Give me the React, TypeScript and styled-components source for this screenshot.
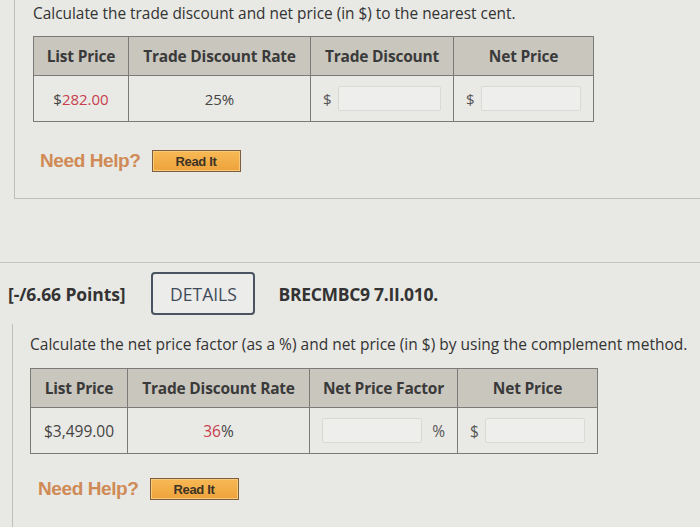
import styled, { createGlobalStyle } from "styled-components";

const GlobalStyle = createGlobalStyle`
  body {
    margin: 0;
    background: #e8e8e4;
    font-family: "Open Sans", "DejaVu Sans", sans-serif;
    color: #333;
  }
`

const Page = styled.div`
  width: 700px;
  height: 527px;
  overflow: hidden;
`

const Panel = styled.div<{ $left: number; $pad: number }>`
  margin-left: ${(p) => p.$left}px;
  padding-left: ${(p) => p.$pad}px;
  border-left: 1px solid #bdbdb9;
`

const TopPanel = styled(Panel)`
  height: 199px;
  border-bottom: 1px solid #bdbdb9;
  padding-top: 3px;
  box-sizing: border-box;
`

const Prompt = styled.p<{ $size: number }>`
  margin: 0;
  font-size: ${(p) => p.$size}px;
  color: #333;
  white-space: nowrap;
`

const Table = styled.table<{ $width: number; $top: number }>`
  width: ${(p) => p.$width}px;
  margin-top: ${(p) => p.$top}px;
  border-collapse: collapse;
  table-layout: fixed;
  border: 1.5px solid #7a7a78;
`

const Th = styled.th<{ $w: number; $size: number }>`
  width: ${(p) => p.$w}px;
  height: 38px;
  padding: 0;
  background: #c9c6be;
  border: 1.5px solid #7a7a78;
  font-size: ${(p) => p.$size}px;
  font-weight: 700;
  color: #3a3a3a;
  text-align: center;
  white-space: nowrap;
  letter-spacing: -0.2px;
`

const Td = styled.td<{ $size: number; $h: number }>`
  height: ${(p) => p.$h}px;
  padding: 0 12px;
  background: #e9e9e5;
  border: 1.5px solid #7a7a78;
  font-size: ${(p) => p.$size}px;
  color: #444;
  text-align: center;
`

const Red = styled.span`
  color: #c7404d;
`

const Field = styled.div`
  display: flex;
  align-items: center;
  gap: 6px;
  color: #555;
`

const Input = styled.div`
  flex: 1;
  height: 23px;
  background: #eeeeec;
  border: 1px solid #d9d9d5;
  border-radius: 2px;
`

const HelpRow = styled.div<{ $top: number; $left: number }>`
  display: flex;
  align-items: center;
  gap: 11px;
  margin-top: ${(p) => p.$top}px;
  margin-left: ${(p) => p.$left}px;
`

const NeedHelp = styled.span`
  font-family: "Liberation Sans", Arial, sans-serif;
  font-size: 19px;
  font-weight: 700;
  color: #cf8a55;
  letter-spacing: -0.4px;
`

const ReadIt = styled.button`
  width: 89px;
  height: 22px;
  padding: 0;
  background: linear-gradient(#f7b955, #eea23b);
  border: 1px solid #7d5f3e;
  box-shadow: inset 0 0 0 1px #f9c97a;
  font-family: "Liberation Sans", Arial, sans-serif;
  font-size: 13px;
  font-weight: 700;
  color: #3b3326;
  letter-spacing: -0.3px;
`

const QuestionHeader = styled.div`
  margin-top: 63px;
  border-top: 1px solid #c4c4c0;
  height: 62px;
  display: flex;
  align-items: center;
  padding-left: 8px;
  box-sizing: border-box;
`

const Points = styled.span`
  font-size: 17.5px;
  font-weight: 700;
  color: #333;
  letter-spacing: -0.1px;
`

const DetailsButton = styled.button`
  margin-left: 26px;
  width: 104px;
  height: 43px;
  background: #ececea;
  border: 2px solid #4a5360;
  border-radius: 4px;
  font-family: "Open Sans", sans-serif;
  font-size: 17.5px;
  color: #3f4a5a;
`

const QuestionId = styled.span`
  margin-left: 23px;
  font-size: 17.5px;
  font-weight: 700;
  color: #333;
  letter-spacing: -0.3px;
`

const BottomPanel = styled(Panel)`
  padding-top: 9px;
  height: 220px;
`

const App = () => {
  return (
    <>
      <GlobalStyle />
      <Page>
        <TopPanel $left={14} $pad={18}>
          <Prompt $size={15.4}>Calculate the trade discount and net price (in $) to the nearest cent.</Prompt>
          <Table $width={556} $top={12}>
            <thead>
              <tr>
                <Th $w={94} $size={15.5}>List Price</Th>
                <Th $w={181} $size={15.5}>Trade Discount Rate</Th>
                <Th $w={142} $size={15.5}>Trade Discount</Th>
                <Th $w={139} $size={15.5}>Net Price</Th>
              </tr>
            </thead>
            <tbody>
              <tr>
                <Td $size={15} $h={45}>$<Red>282.00</Red></Td>
                <Td $size={15} $h={45}>25%</Td>
                <Td $size={15} $h={45}>
                  <Field>$<Input /></Field>
                </Td>
                <Td $size={15} $h={45}>
                  <Field>$<Input /></Field>
                </Td>
              </tr>
            </tbody>
          </Table>
          <HelpRow $top={28} $left={7}>
            <NeedHelp>Need Help?</NeedHelp>
            <ReadIt>Read It</ReadIt>
          </HelpRow>
        </TopPanel>
        <QuestionHeader>
          <Points>[-/6.66 Points]</Points>
          <DetailsButton>DETAILS</DetailsButton>
          <QuestionId>BRECMBC9 7.II.010.</QuestionId>
        </QuestionHeader>
        <BottomPanel $left={12} $pad={17}>
          <Prompt $size={15.5}>Calculate the net price factor (as a %) and net price (in $) by using the complement method.</Prompt>
          <Table $width={563} $top={13}>
            <thead>
              <tr>
                <Th $w={96} $size={15.5}>List Price</Th>
                <Th $w={181} $size={15.5}>Trade Discount Rate</Th>
                <Th $w={147} $size={15.5}>Net Price Factor</Th>
                <Th $w={139} $size={15.5}>Net Price</Th>
              </tr>
            </thead>
            <tbody>
              <tr>
                <Td $size={15.5} $h={45}>$3,499.00</Td>
                <Td $size={15.5} $h={45}><Red>36</Red>%</Td>
                <Td $size={15.5} $h={45}>
                  <Field><Input />&nbsp;%</Field>
                </Td>
                <Td $size={15.5} $h={45}>
                  <Field>$<Input /></Field>
                </Td>
              </tr>
            </tbody>
          </Table>
          <HelpRow $top={24} $left={8}>
            <NeedHelp>Need Help?</NeedHelp>
            <ReadIt>Read It</ReadIt>
          </HelpRow>
        </BottomPanel>
      </Page>
    </>
  );
};

export default App;
